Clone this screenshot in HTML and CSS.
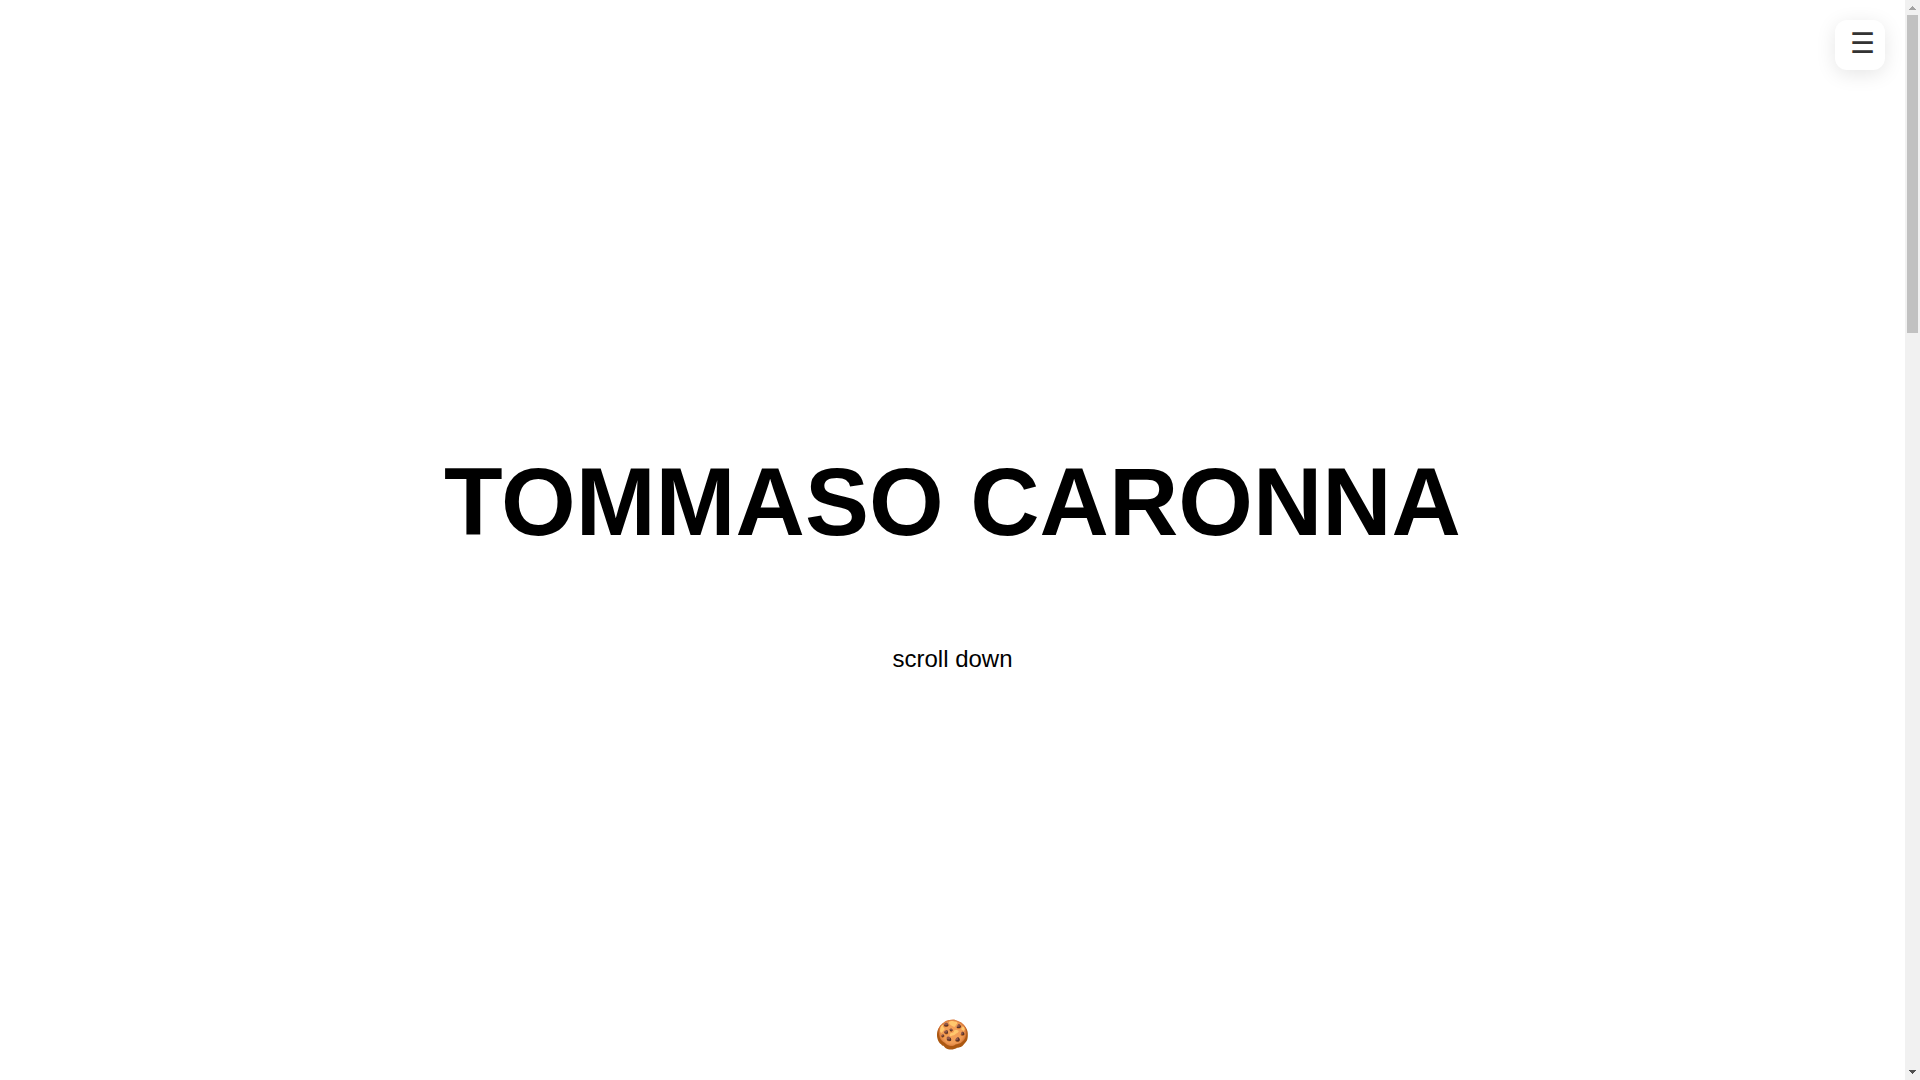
FILE: index.html
```html
<!DOCTYPE html>
<html lang="en">
<head>
    <meta charset="UTF-8">
    <meta name="viewport" content="width=device-width, initial-scale=1.0">
    <title>Tommaso Caronna</title>
    <link rel="stylesheet" href="styles.css">
</head>
<body>
    <main class="page">
        <button class="menu-toggle" type="button" aria-label="Menu">☰</button>

        <section class="hero">
            <h1>TOMMASO CARONNA</h1>
            <p class="scroll-hint">scroll down</p>
        </section>

        <button class="cookie-button" type="button" aria-label="Cookies">🍪</button>
    </main>

    <!-- Scrollbar -->
    <div class="scrollbar" aria-hidden="true">
        <svg class="arrow-up" viewBox="0 0 15 15" shape-rendering="crispEdges"><path d="M7 6h1v1h1v1h1v1h1v1H4V9h1V8h1V7h1z"/></svg>
        <div class="track">
            <div class="thumb"></div>
        </div>
        <svg class="arrow-down" viewBox="0 0 15 15" shape-rendering="crispEdges"><path d="M4 5h7v1h-1v1H9v1H8v1H7V8H6V7H5V6H4z"/></svg>
    </div>
</body>
</html>
```
FILE: styles.css
```css
* {
    box-sizing: border-box;
    margin: 0;
    padding: 0;
}

body {
    display: flex;
    height: 100vh;
    font-family: "Liberation Sans", Arial, sans-serif;
    background: #fff;
    color: #000;
}

.page {
    position: relative;
    flex: 1;
}

/* Menu */
.menu-toggle {
    position: absolute;
    top: 20px;
    right: 20px;
    width: 50px;
    height: 50px;
    padding: 0 15px 4px;
    border: none;
    border-radius: 12px;
    background: #fff;
    box-shadow: 0 4px 20px rgba(0, 0, 0, 0.1);
    color: #333;
    font-size: 28px;
    cursor: pointer;
}

/* Hero */
.hero {
    display: flex;
    flex-direction: column;
    align-items: center;
    justify-content: center;
    gap: 88px;
    height: 100%;
    padding-top: 40px;
}

.hero h1 {
    font-size: 96px;
}

.scroll-hint {
    font-size: 24px;
}

/* Cookies */
.cookie-button {
    position: absolute;
    bottom: 29px;
    left: 50%;
    transform: translateX(-50%);
    border: none;
    background: none;
    font-size: 28px;
    cursor: pointer;
}

/* Scrollbar */
.scrollbar {
    display: flex;
    flex-direction: column;
    width: 15px;
    background: #f1f1f1;
}

.scrollbar svg {
    width: 15px;
    height: 15px;
}

.arrow-up {
    fill: #a3a3a3;
}

.arrow-down {
    fill: #505050;
}

.track {
    flex: 1;
    padding: 0 2px;
}

.thumb {
    height: 30.3%;
    background: #c1c1c1;
}
```
